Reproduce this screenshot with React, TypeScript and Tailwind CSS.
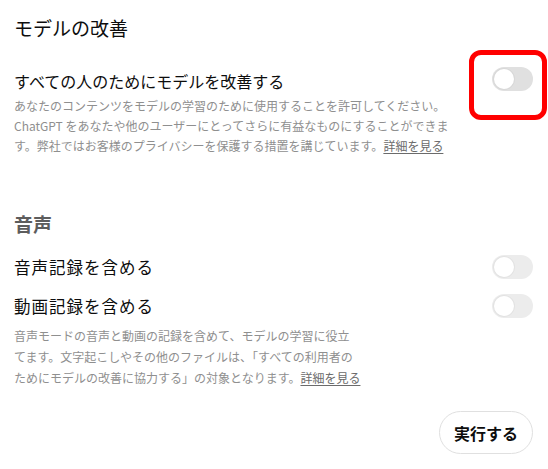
import React, { useState } from 'react';

const font = { fontFamily: '"Noto Sans CJK JP", "Noto Sans", sans-serif' };

const Toggle = ({ on, onChange, dim }: { on: boolean; onChange: () => void; dim?: boolean }) => (
    <button
        type="button"
        onClick={onChange}
        className={`relative h-[24px] w-[41px] shrink-0 rounded-full ${on ? 'bg-[#0d0d0d]' : dim ? 'bg-[#ececec]' : 'bg-[#e0e0e0]'}`}
    >
        <span
            className={`absolute top-[2px] h-[20px] w-[20px] rounded-full bg-white shadow-[0_0_0_1px_rgba(0,0,0,0.04)] ${on ? 'left-[19px]' : 'left-[2px]'}`}
        />
    </button>
);

const App = () => {
    const [improve, setImprove] = useState(false);
    const [audio, setAudio] = useState(false);
    const [video, setVideo] = useState(false);

    return (
        <div className="h-[469px] w-[548px] bg-white pl-[14px] pr-[15px] pt-[14px] text-[#0d0d0d]" style={font}>
            <h2 className="text-[19px] leading-[28px]">モデルの改善</h2>

            <div className="mt-[27px] flex h-[24px] items-center justify-between">
                <span className="text-[16px] leading-[24px]">すべての人のためにモデルを改善する</span>
                <div className="relative">
                    <Toggle on={improve} onChange={() => setImprove(!improve)} />
                    {/* red annotation box */}
                    <div className="pointer-events-none absolute -bottom-[24px] -left-[23px] -right-[14px] -top-[17px] rounded-[12px] border-[5px] border-[#ff0000]" />
                </div>
            </div>
            <p className="mt-[3px] text-[12px] leading-[20px] text-[#8f8f8f]">
                あなたのコンテンツをモデルの学習のために使用することを許可してください。<br />
                ChatGPT をあなたや他のユーザーにとってさらに有益なものにすることができま<br />
                す。弊社ではお客様のプライバシーを保護する措置を講じています。
                <a href="#" className="text-[#6b6b6b] underline underline-offset-2">詳細を見る</a>
            </p>

            <h2 className="mt-[54px] text-[19px] font-semibold leading-[28px] text-[#5d5d5d]">音声</h2>

            <div className="mt-[17px] flex h-[24px] items-center justify-between">
                <span className="text-[16.5px] leading-[24px] tracking-[1px]">音声記録を含める</span>
                <Toggle on={audio} onChange={() => setAudio(!audio)} dim />
            </div>
            <div className="mt-[15px] flex h-[24px] items-center justify-between">
                <span className="text-[16.5px] leading-[24px] tracking-[1px]">動画記録を含める</span>
                <Toggle on={video} onChange={() => setVideo(!video)} dim />
            </div>
            <p className="mt-[7px] text-[12px] leading-[21px] text-[#8f8f8f]">
                音声モードの音声と動画の記録を含めて、モデルの学習に役立<br />
                てます。文字起こしやその他のファイルは、「すべての利用者の<br />
                ためにモデルの改善に協力する」の対象となります。
                <a href="#" className="text-[#6b6b6b] underline underline-offset-2">詳細を見る</a>
            </p>

            <div className="mt-[23px] flex justify-end">
                <button type="button" className="h-[43px] w-[94px] rounded-full border border-[#e0e0e0] bg-white text-[16px] font-bold">
                    実行する
                </button>
            </div>
        </div>
    );
};

export default App;
